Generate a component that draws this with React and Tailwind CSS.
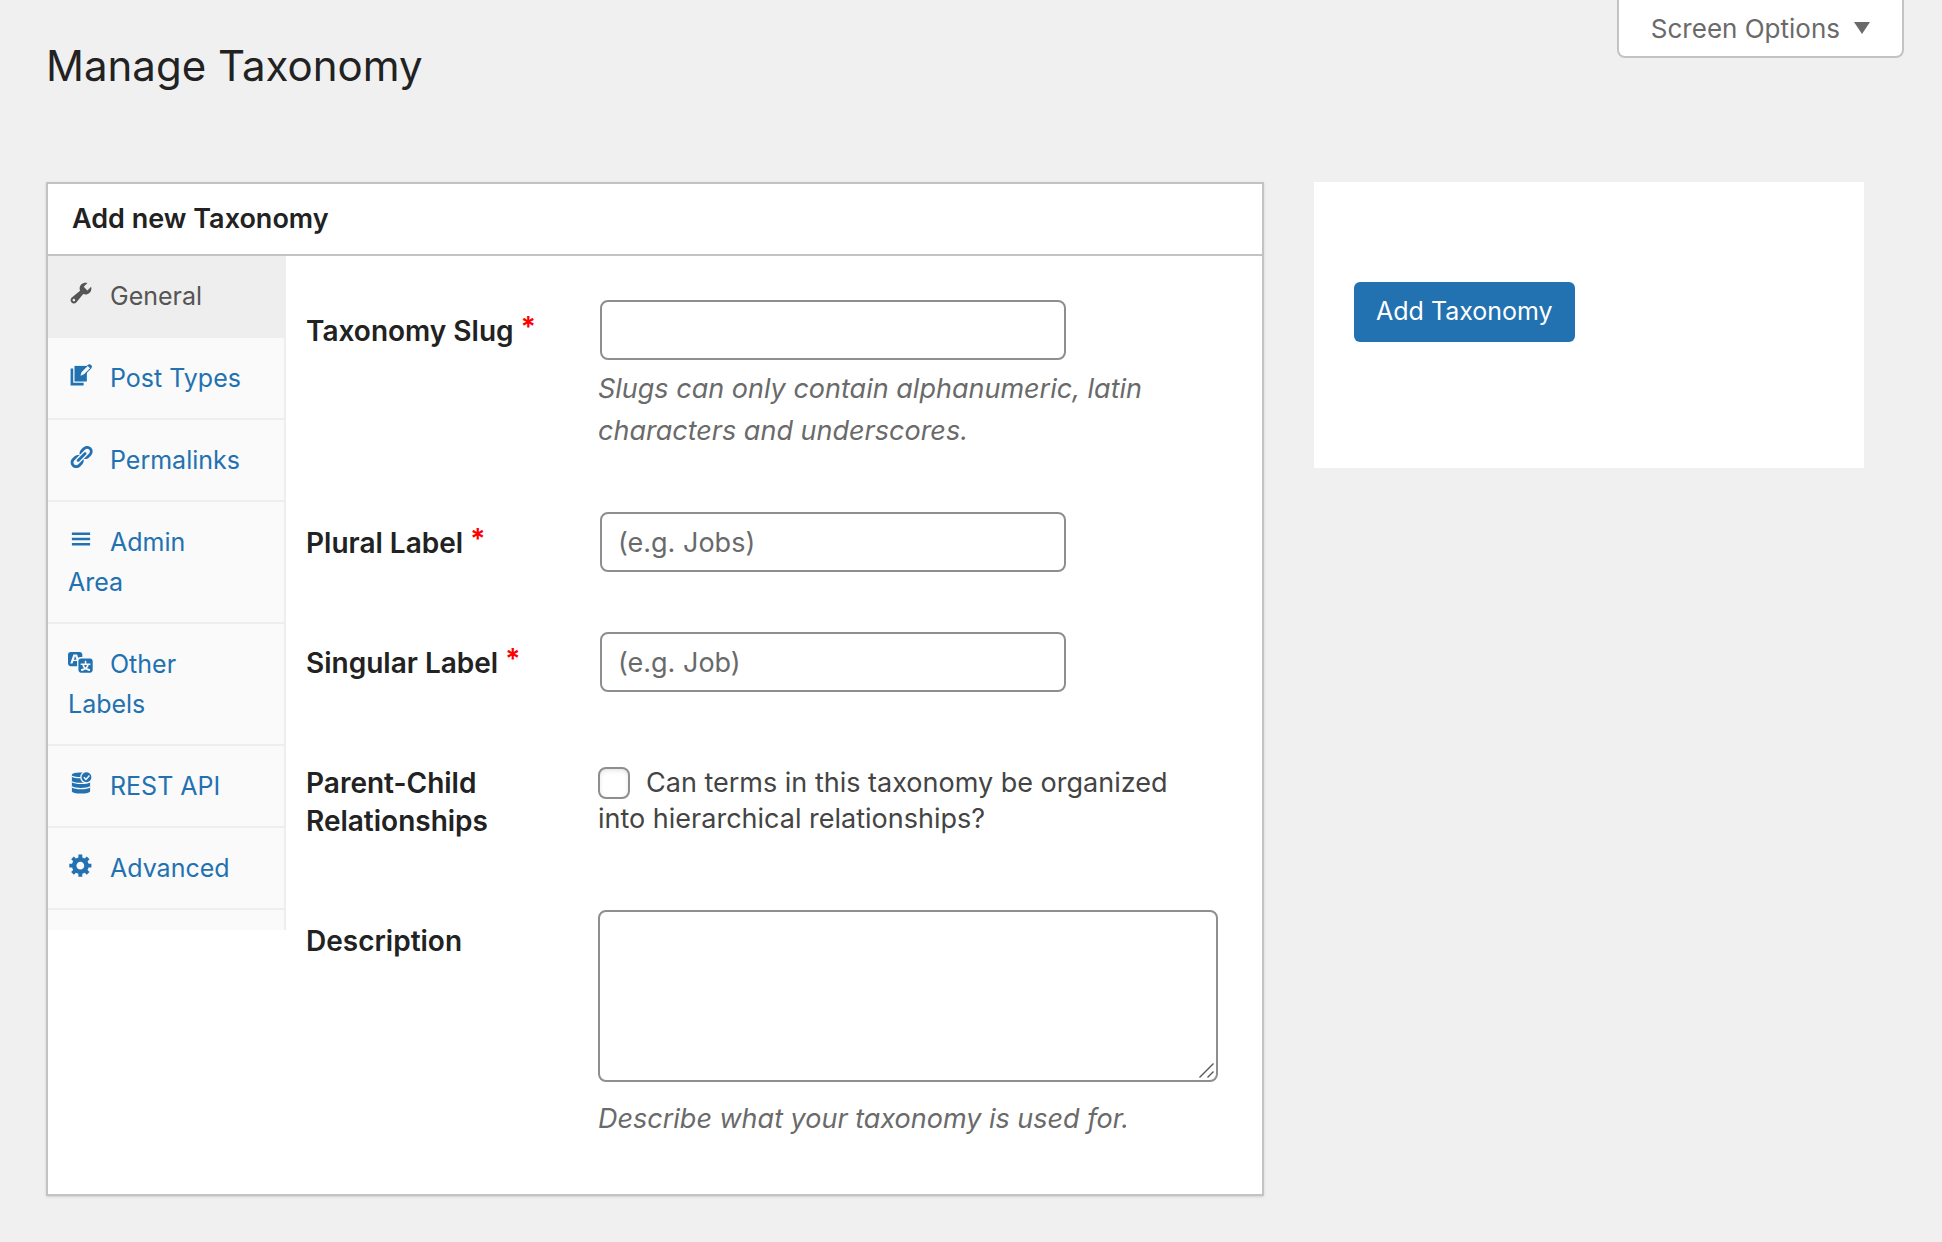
import React from "react";

function Dashicon({ children }) {
  return (
    <svg viewBox="0 0 20 20" className="mt-1 mr-4 inline-block size-[26px] align-top" fill="currentColor" aria-hidden="true">
      {children}
    </svg>
  );
}

const icons = {
  tools: (
    <path d="M16.68 9.77c-1.34 1.34-3.3 1.67-4.95.99l-5.41 6.52c-.99.99-2.59.99-3.58 0s-.99-2.59 0-3.57l6.52-5.42c-.68-1.65-.35-3.61.99-4.95 1.28-1.28 3.12-1.62 4.72-1.06l-2.89 2.89 2.82 2.82 2.86-2.87c.53 1.58.18 3.39-1.08 4.65zM3.81 16.21c.4.39 1.04.39 1.43 0 .4-.4.4-1.04 0-1.43-.39-.4-1.03-.4-1.43 0-.39.39-.39 1.03 0 1.43z" />
  ),
  pages: (
    <>
      <path d="M4 5H2v13h10v-2H4V5z" />
      <path d="M5 3h9.500v12H5z" />
      <path d="M12.500 7.700l4-4" fill="none" stroke="currentColor" strokeWidth="3.800" strokeLinecap="round" />
      <path d="M9.600 10.500l.9-2.800 4.700-4.700 1.800 1.800-4.700 4.700z" fill="#fafafa" />
    </>
  ),
  links: (
    <path d="M17.74 2.76c1.68 1.69 1.68 4.41 0 6.1l-1.53 1.52c-1.12 1.12-2.7 1.47-4.14 1.09l2.62-2.61.76-.77.76-.76c.84-.84.84-2.2 0-3.04-.84-.85-2.2-.85-3.04 0l-.77.76-3.38 3.38c-.37-1.44-.02-3.02 1.1-4.14l1.52-1.53c1.69-1.68 4.42-1.68 6.1 0zM8.59 13.43l5.34-5.34c.42-.42.42-1.1 0-1.52-.44-.43-1.13-.39-1.53 0l-5.33 5.34c-.42.42-.42 1.1 0 1.52.44.43 1.13.39 1.52 0zm-.76 2.29l4.14-4.15c.38 1.44.03 3.02-1.09 4.14l-1.52 1.53c-1.69 1.68-4.41 1.68-6.1 0-1.68-1.68-1.68-4.42 0-6.1l1.53-1.52c1.12-1.12 2.7-1.47 4.14-1.1l-4.14 4.15c-.85.84-.85 2.2 0 3.05.84.84 2.2.84 3.04 0z" />
  ),
  menu: <path d="M17 7V5H3v2h14zm0 4V9H3v2h14zm0 4v-2H3v2h14z" />,
  translation: (
    <path d="M11 7H9.49c-.63 0-1.25.3-1.59.7L7 5H4.13l-2.39 7h1.69l.74-2H7v4H2c-1.1 0-2-.9-2-2V5c0-1.1.9-2 2-2h7c1.1 0 2 .9 2 2v2zM6.51 9H4.49l1-2.93zM10 8h7c1.1 0 2 .9 2 2v7c0 1.1-.9 2-2 2h-7c-1.1 0-2-.9-2-2v-7c0-1.1.9-2 2-2zm7.25 5v-1.08h-3.17V9.75h-1.16v2.17H9.75V13h1.28c.11.85.56 1.85 1.28 2.62-.87.36-1.89.62-2.31.62-.01.02.22.97.2 1.46.84 0 2.21-.5 3.28-1.15 1.09.65 2.48 1.15 3.34 1.15-.02-.49.2-1.44.2-1.46-.43 0-1.49-.27-2.38-.63.7-.77 1.14-1.77 1.25-2.61h1.36zm-3.81 1.93c-.5-.46-.85-1.13-1.01-1.93h2.09c-.17.8-.51 1.47-1 1.93l-.04.03s-.03-.02-.04-.03z" />
  ),
  database: (
    <>
      <path d="M3 3.600C3 2.600 6.100 1.900 10 1.900s7 .7 7 1.700v12.700c0 1-3.100 1.800-7 1.800s-7-.8-7-1.800z" />
      <g fill="none" stroke="#fafafa">
        <path d="M3 4.800c1.500.8 4.200 1.100 7 1.100s5.500-.3 7-1.100" />
        <path d="M3 9c1.500.9 4.200 1.300 7 1.300s5.500-.4 7-1.300" />
        <path d="M3 13c1.500.9 4.200 1.300 7 1.300s5.500-.4 7-1.300" />
      </g>
      <circle cx="14.200" cy="5.600" r="4.300" stroke="#fafafa" />
      <path d="M12.200 5.600l1.600 1.600 2.700-3" fill="none" stroke="#fafafa" strokeWidth="1.100" />
    </>
  ),
  gear: (
    <path d="M18 12h-2.180c-.17.7-.44 1.350-.81 1.930l1.540 1.540-2.100 2.100-1.540-1.540c-.58.36-1.230.63-1.910.79V19H8v-2.180c-.68-.16-1.330-.43-1.910-.79l-1.540 1.540-2.120-2.120 1.540-1.540c-.36-.58-.63-1.230-.79-1.910H1V9.030h2.170c.16-.7.44-1.350.8-1.940L2.430 5.550l2.100-2.100 1.540 1.540c.58-.37 1.240-.64 1.930-.81V2h3v2.180c.68.16 1.330.43 1.910.79l1.540-1.540 2.120 2.120-1.540 1.540c.36.59.64 1.240.8 1.940H18V12zm-8.500 1.500c1.660 0 3-1.340 3-3s-1.340-3-3-3-3 1.340-3 3 1.340 3 3 3z" />
  ),
};

const tabs = [
  { label: "General", icon: "tools", active: true },
  { label: "Post Types", icon: "pages" },
  { label: "Permalinks", icon: "links" },
  { label: "Admin Area", icon: "menu" },
  { label: "Other Labels", icon: "translation" },
  { label: "REST API", icon: "database" },
  { label: "Advanced", icon: "gear" },
];

function Tab({ label, icon, active }) {
  return (
    <li>
      <a
        href="#"
        aria-current={active ? "page" : undefined}
        className={
          active
            ? "-mr-0.5 block border-b-2 border-[#eeeeee] bg-[#eeeeee] py-5 pr-10 pl-5 text-[#555555]"
            : "block border-b-2 border-[#eeeeee] py-5 pr-10 pl-5 text-[#2271b1]"
        }
      >
        <Dashicon>{icons[icon]}</Dashicon>
        {label}
      </a>
    </li>
  );
}

function Row({ id, label, required, pad = "py-[30px]", children }) {
  return (
    <div className="grid grid-cols-[292px_minmax(0,1fr)]">
      <label htmlFor={id} className="pt-[42px] pr-5 text-[28px] leading-[38px] font-semibold text-[#222222]">
        {label}{" "}
        {required && <span className="inline-block align-top leading-[30px] text-[#ff0000]">*</span>}
      </label>
      <div className={pad}>{children}</div>
    </div>
  );
}

function TextInput({ id, placeholder }) {
  return (
    <input
      id={id}
      type="text"
      placeholder={placeholder}
      className="ml-0.5 block h-[60px] w-[466px] max-w-full rounded-lg border-2 border-[#8e8e8e] bg-white px-4 text-[27px] text-[#333333] placeholder:text-[#6a6a6a]"
    />
  );
}

export default function App() {
  return (
    <div className="min-h-screen bg-[#f0f0f0] font-['Inter',sans-serif] text-[#444444]">
      <header className="flex items-start justify-between pr-[38px] pl-[46px]">
        <h1 className="pt-9 pb-[86px] text-[42px] leading-[60px] font-normal text-[#222222]">Manage Taxonomy</h1>
        <button
          type="button"
          className="flex h-[58px] items-center gap-3.5 rounded-b-lg border-2 border-t-0 border-[#c3c3c3] bg-white px-8 text-[26px] text-[#6a6a6a]"
        >
          Screen Options
          <svg viewBox="0 0 16 12" className="h-3 w-4" fill="currentColor" aria-hidden="true">
            <path d="M0 0h16L8 12z" />
          </svg>
        </button>
      </header>

      <div className="grid grid-cols-[minmax(0,1fr)_550px] items-start gap-[50px] pr-[78px] pb-[46px] pl-[46px]">
        <section className="border-2 border-[#c3c3c3] bg-white shadow-sm">
          <h2 className="border-b-2 border-[#c3c3c3] px-6 py-4 text-[27px] leading-[38px] font-semibold text-[#222222]">
            Add new Taxonomy
          </h2>
          <div className="flex items-start">
            <nav className="w-[238px] shrink-0 border-r-2 border-[#eeeeee] bg-[#fafafa] pb-5">
              <ul className="text-[25px] leading-10">
                {tabs.map((tab) => (
                  <Tab key={tab.label} {...tab} />
                ))}
              </ul>
            </nav>
            <form className="min-w-0 flex-1 pt-3.5 pr-11 pb-6 pl-5">
              <Row id="slug" label="Taxonomy Slug" required>
                <TextInput id="slug" />
                <p className="mt-2 text-[27px] leading-[42px] text-[#6a6a6a] italic">
                  Slugs can only contain alphanumeric, latin characters and underscores.
                </p>
              </Row>
              <Row id="plural" label="Plural Label" required>
                <TextInput id="plural" placeholder="(e.g. Jobs)" />
              </Row>
              <Row id="singular" label="Singular Label" required>
                <TextInput id="singular" placeholder="(e.g. Job)" />
              </Row>
              <Row id="hierarchical" label="Parent-Child Relationships" pad="py-[43px]">
                <label htmlFor="hierarchical" className="block text-[27px] leading-9">
                  <input
                    id="hierarchical"
                    type="checkbox"
                    className="mt-0.5 mr-4 size-8 appearance-none rounded-lg border-2 border-[#8e8e8e] bg-white align-top shadow-[inset_0_2px_4px_rgba(0,0,0,0.1)]"
                  />
                  Can terms in this taxonomy be organized into hierarchical relationships?
                </label>
              </Row>
              <Row id="description" label="Description">
                <div className="relative">
                  <textarea
                    id="description"
                    className="block h-[172px] w-full resize-none rounded-lg border-2 border-[#8e8e8e] bg-white px-4 py-2 text-[27px]"
                  />
                  <svg
                    viewBox="0 0 15 15"
                    className="pointer-events-none absolute right-1 bottom-1 size-[15px]"
                    fill="none"
                    stroke="#555555"
                    strokeWidth="1.4"
                    aria-hidden="true"
                  >
                    <path d="M.5 14.500l14-14M8.500 14.500l6-6" />
                  </svg>
                </div>
                <p className="mt-4 text-[27px] leading-[42px] text-[#6a6a6a] italic">
                  Describe what your taxonomy is used for.
                </p>
              </Row>
            </form>
          </div>
        </section>

        <aside className="bg-white px-10 pt-[100px] pb-[126px]">
          <button type="button" className="h-[60px] rounded-md bg-[#2271b1] px-[22px] text-[25px] text-white">
            Add Taxonomy
          </button>
        </aside>
      </div>
    </div>
  );
}
